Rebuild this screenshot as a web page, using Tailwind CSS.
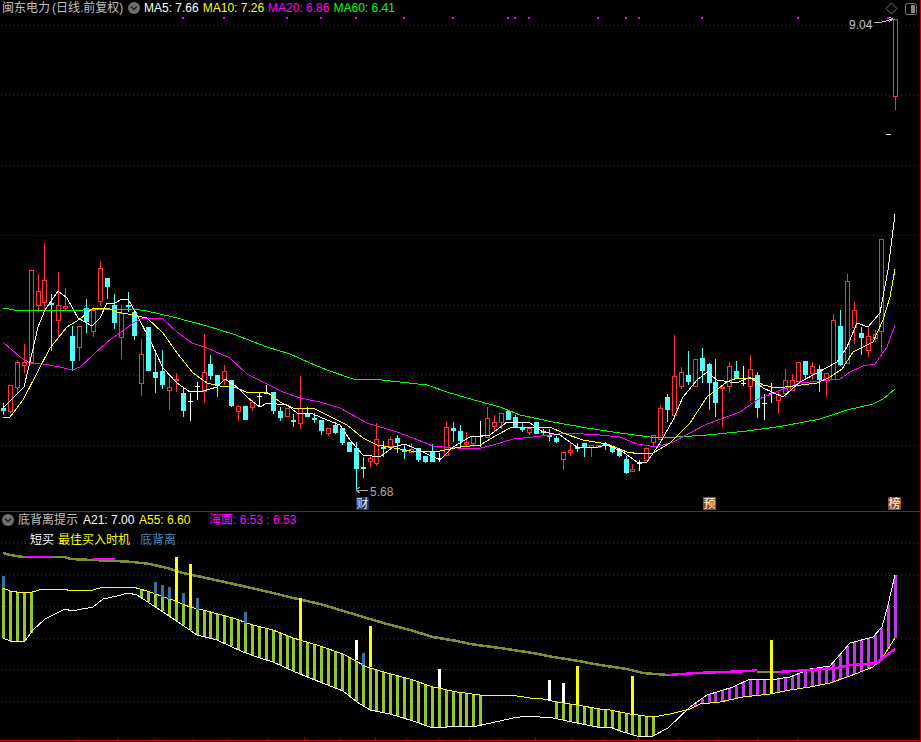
<!DOCTYPE html>
<html lang="zh-CN">
<head>
    <meta charset="UTF-8">
    <title>闽东电力 K线</title>
    <script src="https://cdn.jsdelivr.net/npm/@tailwindcss/browser@4"></script>
</head>
<body class="bg-black overflow-hidden">
    <div class="w-[921px] h-[742px] flex flex-col bg-black border-r border-[#c00000] font-['Liberation_Sans','Noto_Sans_CJK_SC',sans-serif] text-xs leading-4">

        <!-- K line panel -->
        <div class="relative h-[511px] shrink-0">
            <svg id="main" class="block" width="920" height="511" viewBox="0 0 920 511" shape-rendering="crispEdges"></svg>

            <div class="absolute left-[2px] top-0 flex items-center h-4 whitespace-nowrap">
                <span class="w-[120px] text-[#c0c0c0]">闽东电力<span class="ml-[2px]">(日线.前复权)</span></span>
                <svg class="ml-[6px] mr-[4px]" width="12" height="12" viewBox="0 0 12 12">
                    <circle cx="6" cy="6" r="6" fill="#6e6e6e"/>
                    <path d="M3 4.5 L6 7.5 L9 4.5" fill="none" stroke="#1c1c1c" stroke-width="1.4"/>
                </svg>
                <div class="flex gap-[4px]">
                    <span class="text-white">MA5: 7.66</span>
                    <span class="text-[#ffff00]">MA10: 7.26</span>
                    <span class="text-[#ff00ff]">MA20: 6.86</span>
                    <span class="text-[#00ff00]">MA60: 6.41</span>
                </div>
            </div>

            <div class="absolute right-[3px] top-[2px] flex items-center gap-[7px]">
                <svg width="13" height="13" viewBox="0 0 13 13" fill="none">
                    <path d="M6.5 1 L12 6.5 L6.5 12 L1 6.5 Z" stroke="#777777"/>
                </svg>
                <svg width="12" height="12" viewBox="0 0 12 12">
                    <rect x="0.5" y="0.5" width="11" height="11" rx="2" fill="none" stroke="#777777"/>
                    <rect x="6" y="2" width="4" height="8" fill="#888888"/>
                </svg>
            </div>

            <span class="absolute left-[849px] top-[17px] text-[#c0c0c0]">9.04</span>
            <span class="absolute left-[370px] top-[484px] text-[#a8a8a8]">5.68</span>
            <span class="absolute left-[356px] top-[497px] w-[13px] h-[13px] flex items-center justify-center bg-[#0b3a66] text-[#dfefff]">财</span>
            <span class="absolute left-[703px] top-[497px] w-[13px] h-[13px] flex items-center justify-center bg-[#98480f] text-white">预</span>
            <span class="absolute left-[888px] top-[497px] w-[13px] h-[13px] flex items-center justify-center bg-[#98480f] text-white">榜</span>
        </div>

        <div class="h-px shrink-0 bg-[#c00000]"></div>

        <!-- indicator panel -->
        <div class="relative flex-1">
            <svg id="sub" class="block" width="920" height="230" viewBox="0 512 920 230" shape-rendering="crispEdges"></svg>

            <div class="absolute left-[2px] top-0 flex items-center h-4 whitespace-nowrap">
                <svg class="mr-[4px]" width="12" height="12" viewBox="0 0 12 12">
                    <circle cx="6" cy="6" r="6" fill="#6e6e6e"/>
                    <path d="M3 4.5 L6 7.5 L9 4.5" fill="none" stroke="#1c1c1c" stroke-width="1.4"/>
                </svg>
                <span class="w-[60px] text-[#c0c0c0]">底背离提示</span>
                <span class="ml-[5px] w-[56px] text-white">A21: 7.00</span>
                <span class="w-[70px] text-[#ffff00]">A55: 6.60</span>
                <span class="text-[#ff00ff]">海面: 6.53 : 6.53</span>
            </div>

            <div class="absolute left-[30px] top-[20px] flex h-4 whitespace-nowrap">
                <span class="w-[28px] text-white">短买</span>
                <span class="w-[82px] text-[#ffff00]">最佳买入时机</span>
                <span class="text-[#4a86b8]">底背离</span>
            </div>
        </div>
    </div>

    <script>
        // candle x: 7px pitch with a 6px step now and then
        const shortSteps = [6, 19, 30, 42, 54, 67, 79, 91, 103, 115, 127];
        const cx = i => 3 + 7 * i - shortSteps.filter(s => s <= i).length;

        // [type, bodyTop, bodyBottom, high, low]  r=up c=down w=doji
        const candles = [
            ['c',408,411,403,415],['r',385,411,385,413],['r',362,387,360,393],['r',362,365,344,373],['r',270,362,270,362],
            ['r',291,305,274,312],['r',280,302,243,312],['c',303,305,294,351],['r',305,320,272,337],['r',306,308,288,310],
            ['c',336,361,326,371],['r',326,347,326,361],['c',308,322,299,333],['r',310,331,307,337],['r',268,301,261,306],
            ['c',278,287,278,299],['c',305,323,294,329],['r',313,337,305,359],['c',305,306,292,312],['c',312,336,312,340],
            ['r',354,383,339,396],['c',327,371,327,371],['c',372,378,350,393],['c',371,385,350,389],['r',387,390,377,410],
            ['r',379,380,373,392],['c',393,411,388,417],['w',401,401,393,421],['w',386,386,382,400],['r',372,391,334,403],
            ['c',364,376,355,380],['c',375,386,375,397],['r',371,379,365,385],['c',380,406,380,407],['r',406,411,405,421],
            ['c',406,420,406,420],['r',402,407,400,411],['w',396,396,392,407],['w',393,393,385,393],['c',392,411,392,414],
            ['c',411,418,407,421],['r',408,416,408,417],['c',420,421,414,427],['r',408,423,376,429],['c',413,417,407,417],
            ['c',418,419,413,423],['c',420,431,420,435],['r',428,433,428,436],['c',425,433,422,434],['c',428,443,428,445],
            ['c',442,452,442,452],['c',448,469,442,489],['c',467,469,457,478],['r',458,461,455,467],['r',439,463,423,466],
            ['c',447,448,441,457],['r',439,446,437,446],['c',438,443,435,453],['c',450,451,444,459],['r',449,452,443,453],
            ['c',448,460,448,462],['c',456,462,456,463],['c',452,462,444,462],['w',458,458,453,462],['r',427,455,422,456],
            ['c',428,431,422,442],['c',431,441,425,449],['r',442,444,432,447],['r',436,443,435,447],['w',436,436,421,447],
            ['r',418,437,407,438],['r',422,426,415,431],['r',413,422,413,429],['c',411,420,411,420],['c',417,427,415,428],
            ['c',427,430,422,432],['r',428,432,427,435],['c',422,434,422,434],['c',431,432,429,436],['c',435,436,429,441],
            ['c',438,442,436,443],['r',452,459,452,470],['r',450,452,443,456],['c',447,448,443,452],['c',443,448,443,457],
            ['r',445,447,445,457],['r',445,447,445,447],['c',444,445,442,450],['c',447,452,447,453],['c',449,456,449,457],
            ['c',459,473,456,474],['r',469,471,464,471],['w',463,463,460,471],['r',448,460,447,460],['r',435,442,435,447],
            ['r',408,439,405,440],['c',397,410,394,422],['r',376,415,335,420],['r',372,386,367,389],['c',375,382,351,385],
            ['r',359,386,359,386],['c',358,371,348,383],['c',364,383,363,410],['c',382,403,359,417],['r',387,388,386,427],
            ['r',366,386,362,393],['c',371,378,361,378],['w',383,383,366,386],['r',369,386,355,401],['c',375,408,372,418],
            ['w',403,403,394,420],['w',393,393,383,403],['r',394,400,392,414],['r',380,393,369,397],['r',380,390,374,390],
            ['r',362,381,362,381],['c',361,375,361,379],['r',366,373,362,380],['c',369,380,365,392],['r',373,380,373,397],
            ['r',320,379,314,379],['c',326,365,310,366],['r',281,363,274,363],['r',310,327,302,344],['c',333,338,327,355],
            ['r',336,350,326,357],['r',334,338,330,342],['r',239,331,239,352],['w',134,134,134,134],['r',19,96,19,110]
        ];

        const ma5 = [[3,408],[13,398],[24,387],[32,353],[38,327],[45,310],[58,291],[67,298],[78,318],[92,326],[100,318],[107,303],[115,303],[122,299],[128,299],[137,315],[150,340],[163,368],[177,383],[190,392],[203,391],[217,387],[225,379],[237,387],[248,398],[260,407],[267,403],[287,405],[297,413],[313,414],[327,420],[340,425],[350,440],[363,455],[380,457],[393,447],[405,444],[423,452],[440,460],[453,447],[470,437],[490,435],[507,422],[530,423],[543,432],[560,435],[577,447],[593,448],[607,445],[623,452],[637,462],[647,462],[660,443],[673,420],[683,397],[697,380],[707,372],[717,380],[737,383],[750,377],[763,388],[783,397],[800,382],[817,373],[837,362],[847,347],[857,323],[868,327],[880,313],[888,270],[895,214]];
        const ma10 = [[3,418],[10,417],[23,400],[37,373],[50,348],[67,327],[80,319],[93,308],[108,308],[117,312],[133,315],[147,318],[163,333],[177,353],[193,373],[207,383],[220,386],[237,388],[248,393],[267,392],[280,402],[293,408],[315,409],[327,415],[347,425],[363,438],[377,445],[400,449],[417,452],[440,451],[460,447],[480,445],[497,435],[510,428],[533,427],[550,427],[563,433],[583,440],[607,444],[627,452],[640,454],[653,453],[670,443],[690,423],[707,397],[727,382],[737,378],[753,378],[763,385],[777,388],[793,386],[817,383],[830,377],[842,369],[853,352],[873,342],[883,320],[890,297],[895,269]];
        const ma20 = [[3,342],[20,357],[30,363],[43,364],[60,367],[72,370],[80,367],[93,355],[107,342],[120,333],[133,323],[143,318],[163,319],[177,332],[192,343],[207,348],[230,358],[247,374],[263,382],[283,392],[300,398],[320,402],[340,408],[367,423],[397,432],[413,438],[433,446],[457,448],[477,449],[493,445],[513,439],[533,437],[567,433],[600,435],[620,437],[637,444],[657,447],[673,442],[707,424],[740,412],[757,400],[773,393],[800,383],[840,379],[850,372],[863,366],[875,364],[887,347],[895,325]];
        const ma60 = [[3,308],[20,311],[30,310],[83,310],[133,309],[147,311],[173,317],[207,326],[233,334],[267,347],[290,354],[310,363],[327,370],[353,379],[373,379],[400,382],[427,385],[447,392],[467,398],[500,407],[520,415],[553,422],[587,428],[620,433],[650,437],[677,437],[707,435],[747,431],[783,426],[820,419],[847,410],[873,404],[883,399],[895,389]];

        const olive = [[3,553],[10,555],[23,557],[65,557],[70,559],[93,560],[115,561],[133,562],[150,564],[167,568],[183,573],[197,576],[220,581],[247,587],[273,593],[293,598],[320,604],[350,613],[370,619],[387,624],[410,630],[433,637],[457,641],[470,644],[500,648],[533,653],[553,657],[573,660],[600,665],[627,669],[643,673],[668,675]];
        const seaPink = [[[25,557],[52,557]],[[93,559],[115,559]],[[668,675],[697,673],[723,672],[750,671],[757,670]],[[778,672],[810,670],[837,668],[850,665],[877,663],[883,658],[895,649]]];
        const seaOlive = [[757,672],[778,672]];
        const upper = [[3,588],[10,591],[23,593],[32,592],[43,589],[60,589],[75,591],[93,590],[103,587],[133,587],[147,591],[173,600],[190,607],[203,610],[233,618],[253,625],[273,630],[293,638],[300,640],[320,646],[343,654],[367,667],[387,673],[410,679],[433,687],[457,692],[480,695],[490,695],[517,696],[530,698],[543,699],[557,702],[577,705],[600,709],[610,710],[630,714],[653,717],[670,714],[690,709],[700,704],[720,702],[743,697],[770,694],[790,690],[810,687],[830,683],[850,676],[873,667],[883,657],[895,638]];
        const lower = [[3,638],[10,641],[25,641],[33,630],[45,619],[65,609],[72,611],[93,607],[103,599],[117,596],[128,593],[137,595],[160,610],[175,620],[197,635],[217,640],[243,652],[260,658],[273,662],[293,671],[300,674],[320,682],[343,691],[357,702],[370,710],[390,714],[413,721],[430,727],[447,727],[477,726],[500,721],[513,718],[527,716],[553,718],[577,723],[597,727],[610,727],[620,731],[630,734],[640,737],[653,736],[668,728],[690,707],[707,695],[733,687],[750,679],[770,680],[790,677],[810,669],[830,666],[850,643],[873,637],[882,627],[888,605],[895,575]];

        // value of a polyline at x
        function at(pts, x) {
            for (let k = 1; k < pts.length; k++) {
                if (x <= pts[k][0]) {
                    const [x0, y0] = pts[k - 1], [x1, y1] = pts[k];
                    return Math.round(y0 + (y1 - y0) * (x - x0) / (x1 - x0));
                }
            }
            return pts[pts.length - 1][1];
        }

        const RED = '#ff3232', CYAN = '#54fcfc', WHITE = '#ffffff', YELLOW = '#ffff00';
        const rect = (x, y, w, h, fill) => `<rect x="${x}" y="${y}" width="${w}" height="${h}" fill="${fill}"/>`;
        const line = (pts, color, w = 1) => `<polyline points="${pts.map(p => p.join(',')).join(' ')}" fill="none" stroke="${color}" stroke-width="${w}"/>`;
        const dotted = (y, color) => `<line x1="1" x2="920" y1="${y + 0.5}" y2="${y + 0.5}" stroke="${color}" stroke-dasharray="1 3"/>`;

        let main = '';
        [25, 95, 165, 235, 305, 375, 445].forEach(y => main += dotted(y, '#7a1c1c'));
        [183, 224, 287, 321, 356, 404, 453, 508, 515, 529, 598, 626, 639, 702, 798, 888].forEach(x => main += rect(x - 1, 17, 2, 2, '#ff00ff'));

        candles.forEach(([t, top, bot, hi, lo], i) => {
            const x = cx(i);
            const color = t === 'r' ? RED : t === 'c' ? CYAN : WHITE;
            if (lo > hi) main += rect(x, hi, 1, lo - hi, color);
            if (t === 'r') {
                main += `<rect x="${x - 1.5}" y="${top + 0.5}" width="4" height="${Math.max(bot - top, 1)}" fill="#000" stroke="${RED}"/>`;
            } else if (t === 'c') {
                main += rect(x - 2, top, 5, Math.max(bot - top, 2), CYAN);
            } else {
                main += rect(x - 2, top, 5, 1, WHITE);
            }
        });

        main += line(ma60, '#00ff00') + line(ma20, '#ff00ff') + line(ma10, YELLOW) + line(ma5, WHITE);
        // price tags
        main += line([[874, 23], [882, 22], [893, 19]], '#c0c0c0');
        main += line([[889, 17], [893, 19], [889, 22]], '#c0c0c0');
        main += line([[368, 490], [356, 490]], '#a8a8a8');
        main += line([[360, 487], [356, 490], [360, 493]], '#a8a8a8');
        document.getElementById('main').innerHTML = main;

        let sub = '';
        [543, 575, 606, 638, 669, 701].forEach(y => sub += dotted(y, '#8a1414'));

        // histogram between the two lines
        const GREEN = '#92c72e', PURPLE = '#bb3ce2';
        const bars = [[0, 4, GREEN], [20, 69, GREEN], [80, 94, GREEN], [100, 129, PURPLE]];
        bars.forEach(([from, to, color]) => {
            for (let i = from; i <= to; i++) {
                const x = cx(i), a = at(upper, x), b = at(lower, x);
                sub += rect(x - 1, Math.min(a, b), 3, Math.abs(b - a), color);
            }
        });
        sub += line(upper, YELLOW) + line(lower, WHITE);
        sub += line(olive, '#7d8f2c', 2.5) + line(seaOlive, '#7d8f2c', 2.5);
        seaPink.forEach(p => sub += line(p, '#ff00ff', 2.5));

        // signal bars: [index, top, bottom]
        [[0,576,588],[22,582,594],[23,585,597],[24,587,599],[26,593,604],[28,598,610],[35,612,623],[52,653,665]].forEach(([i, t, b]) => sub += rect(cx(i) - 1, t, 3, b - t, '#38719f'));
        [[25,557,602],[27,564,607],[43,598,640],[53,626,667],[83,666,705],[91,676,715],[111,640,693]].forEach(([i, t, b]) => sub += rect(cx(i) - 1, t, 3, b - t, YELLOW));
        [[51,640,660],[63,669,688],[79,680,701],[81,683,703]].forEach(([i, t, b]) => sub += rect(cx(i) - 1, t, 3, b - t, WHITE));

        // bottom axis with ticks
        sub += rect(0, 740, 920, 1, '#d00000');
        [78, 117, 154, 193, 228, 267, 304, 339, 375, 406, 438, 469, 500, 535, 571, 604, 638, 678, 718, 757, 797].forEach(x => sub += rect(x, 738, 1, 2, '#d00000'));
        document.getElementById('sub').innerHTML = sub;
    </script>
</body>
</html>
